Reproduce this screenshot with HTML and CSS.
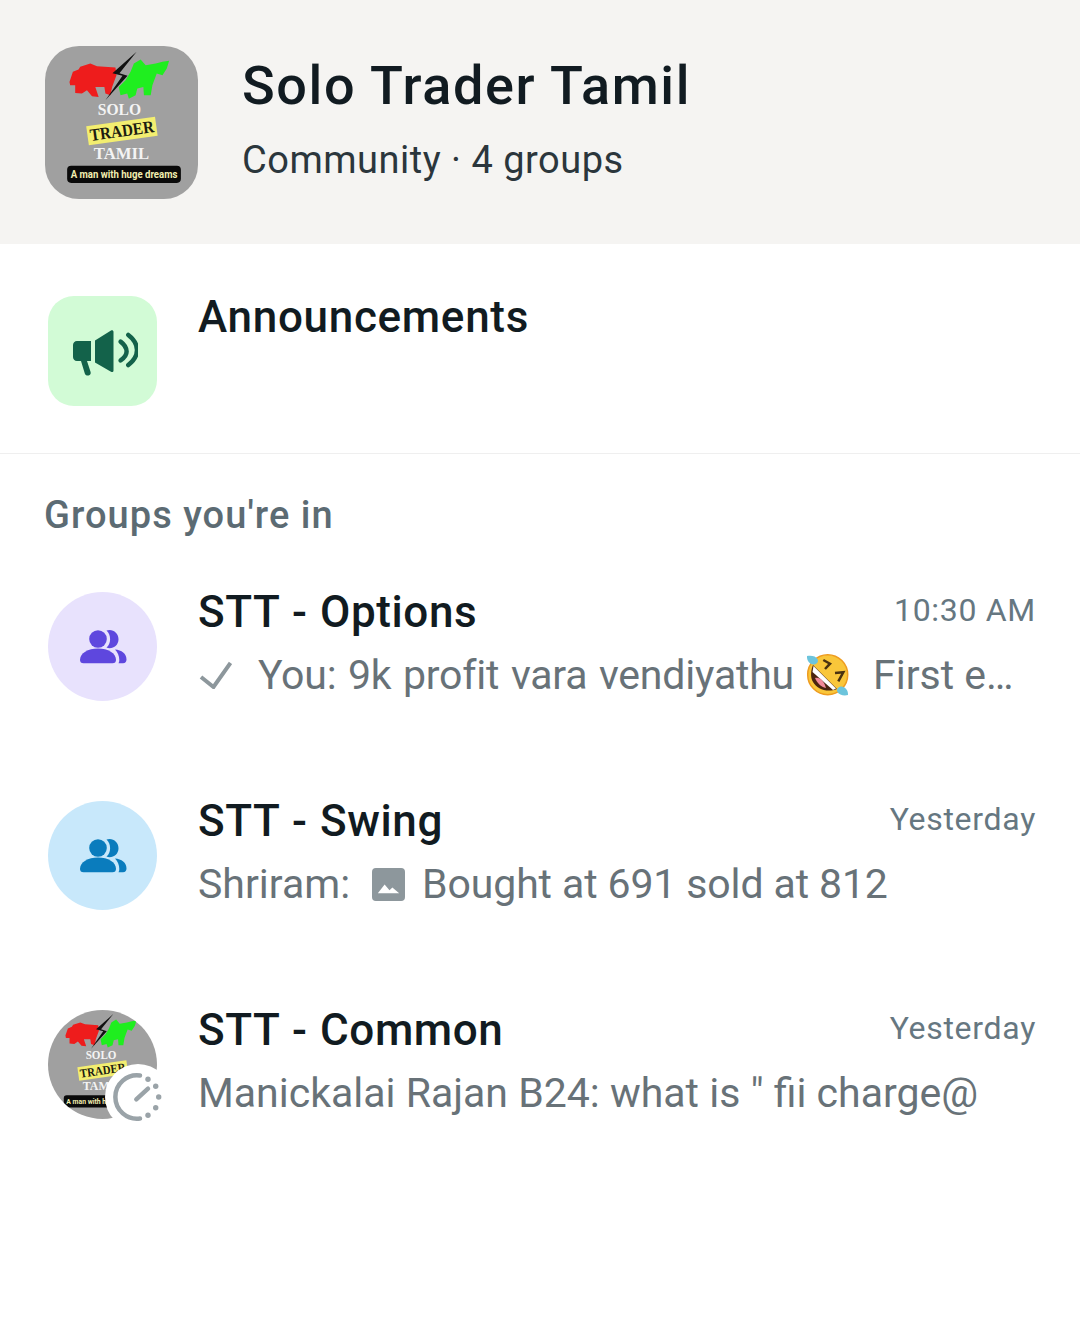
FILE: index.html
```html
<!DOCTYPE html>
<html lang="en">
<head>
<meta charset="utf-8">
<title>Solo Trader Tamil</title>
<link rel="stylesheet" href="styles.css">
</head>
<body>
<svg class="defs" width="0" height="0" aria-hidden="true">
  <defs>
    <symbol id="people" viewBox="0 0 48 36">
      <circle cx="19" cy="10" r="8.8"/>
      <path d="M27.5 1.6c1-.4 2-.6 3-.6 5 0 9 4 9 9.2s-4 9-9 9c-1 0-2-.2-3-.6 2.3-2 3.6-5 3.6-8.4s-1.3-6.600-3.600-8.600z"/>
      <path d="M1 31c0-7 8-11.500 18-11.500S37 24 37 31c0 2-1.200 3.300-3.500 3.300h-29C2.200 34.300 1 33 1 31z"/>
      <path d="M36 20.500c6.500.6 11.500 4 11.500 10 0 2.300-1.300 3.800-3.500 3.800h-4.500c.6-1 .8-2.100.8-3.300 0-4-1.600-7.800-4.300-10.500z"/>
    </symbol>
    <symbol id="logo-art" viewBox="0 0 152 152">
      <path class="bull-red" d="M24.300 35.700L27.700 25.700 33.300 23.300 35 20.700 45 17.300 51.700 20 70 21.300 71 29 66.700 40.700 65 49 60 47.300 59 40.700 50 40.700 53.300 50.700 46.700 50 41.700 44 36.700 47.300 30 46.700 30 39 25 39z"/>
      <path class="bull-green" d="M88.300 17.300L95 13.300 100 19 110 17.300 116.700 15.700 123.300 14.700 121 22.300 116.700 29 111 27.300 106.700 39 105 49 98.300 49 97.700 40.700 91.700 42.300 90 49 83.300 52.300 81.700 47.300 75 49 73.300 40.700 80 34 85 25.700z"/>
      <path class="bolt" d="M91 5.700L67 27l10 2.500L60 54l22-24.500-8-2.500z"/>
      <text class="logo-word" x="74" y="69" text-anchor="middle" textLength="43" lengthAdjust="spacingAndGlyphs">SOLO</text>
      <g transform="rotate(-8 76 85)">
        <rect class="logo-band" x="42" y="75" width="69" height="19"/>
        <text class="logo-trader" x="76.500" y="90" text-anchor="middle" textLength="64" lengthAdjust="spacingAndGlyphs">TRADER</text>
      </g>
      <text class="logo-word" x="76" y="112" text-anchor="middle" textLength="55" lengthAdjust="spacingAndGlyphs">TAMIL</text>
      <rect class="logo-tag" x="22" y="119" width="113" height="17" rx="4"/>
      <text class="logo-tagline" x="78.500" y="131" text-anchor="middle" textLength="106" lengthAdjust="spacingAndGlyphs">A man with huge dreams</text>
    </symbol>
  </defs>
</svg>

<header class="community">
  <div class="community-logo">
    <svg class="logo-svg" viewBox="0 0 152 152"><use href="#logo-art" width="152" height="152"/></svg>
  </div>
  <div class="community-text">
    <h1 class="community-name">Solo Trader Tamil</h1>
    <p class="community-meta">Community · 4 groups</p>
  </div>
</header>

<section class="announce">
  <div class="announce-icon">
    <svg class="megaphone" viewBox="0 0 66 50">
      <path d="M5 13h14v20h-4l3.600 11c.5 1.800-.4 3-2 3.400-1.700.4-3.200-.3-3.800-2L9 33H5c-2.500 0-4-2-4-4V17c0-2.200 1.600-4 4-4z"/>
      <path d="M23 12.500L39 2.400c1.200-.7 2.500 0 2.500 1.400v38.600c0 1.400-1.300 2.100-2.500 1.300L23 34.500z"/>
      <path class="wave" d="M48.600 13.600c4 3 6 6.400 6 10s-2 6.200-6 8.800"/>
      <path class="wave" d="M56.300 7c5.800 4.500 8.700 9.500 8.700 15s-2.900 10.500-8.700 15"/>
    </svg>
  </div>
  <h2 class="announce-title">Announcements</h2>
</section>

<h3 class="groups-heading">Groups you're in</h3>

<ul class="groups">
  <li class="group">
    <div class="avatar avatar-purple"><svg class="people"><use href="#people"/></svg></div>
    <div class="group-body">
      <div class="group-top"><span class="group-name">STT - Options</span><span class="group-time">10:30 AM</span></div>
      <div class="group-msg">
        <svg class="tick" viewBox="0 0 34 28"><path d="M3 16l12.500 10L32.500 2"/></svg>
        <span class="msg-you">You: 9k profit vara vendiyathu</span>
        <svg class="emoji" viewBox="0 0 46 46">
          <circle class="e-face" cx="22.700" cy="22.700" r="20"/>
          <path class="e-mouth" d="M8 13l24 24c-10 4-20 0-24-7-3-5-2-12 0-17z"/>
          <path class="e-teeth" d="M8.500 14L31 36.500l-3 1.500L7.500 20z"/>
          <path class="e-tongue" d="M10 26c5-1 9 3 11 10-5-1-9-5-11-10z"/>
          <path class="e-eye" d="M18.300 8l6.700 3.700-5 5.300M30 21l8.300-.7-5 9"/>
          <path class="e-tear" d="M2 4c4-1 9 0 10.500 3s-1 5.500-4 5.500S1.500 9 2 4zM43 43c-4 1-9 0-10.500-3s1-5.500 4-5.500S43.500 38 43 43z"/>
        </svg>
        <span class="msg-tail">First e…</span>
      </div>
    </div>
  </li>
  <li class="group">
    <div class="avatar avatar-blue"><svg class="people"><use href="#people"/></svg></div>
    <div class="group-body">
      <div class="group-top"><span class="group-name">STT - Swing</span><span class="group-time">Yesterday</span></div>
      <div class="group-msg">
        <span class="msg-sender">Shriram:</span>
        <svg class="photo" viewBox="0 0 34 34">
          <rect class="photo-bg" width="34" height="34" rx="4"/>
          <path class="photo-hill" d="M6 26l7-9 5 6 3-3 7 6z"/>
        </svg>
        <span class="msg-photo-text">Bought at 691 sold at 812</span>
      </div>
    </div>
  </li>
  <li class="group">
    <div class="avatar avatar-logo">
      <svg class="avatar-art" viewBox="0 0 152 152"><use href="#logo-art" width="152" height="152"/></svg>
      <span class="timer-badge">
        <svg class="timer" viewBox="0 0 52 52">
          <path class="timer-arc" d="M28 4.500A21.700 21.700 0 1 0 28 47.500"/>
          <path class="timer-hand" d="M24.300 28.300L36 17.700"/>
          <g class="timer-dots">
            <circle cx="36" cy="8.300" r="2.700"/><circle cx="43.700" cy="15.300" r="2.700"/><circle cx="46.700" cy="26" r="2.700"/><circle cx="43.700" cy="36.700" r="2.700"/><circle cx="36" cy="44.300" r="2.700"/>
          </g>
        </svg>
      </span>
    </div>
    <div class="group-body">
      <div class="group-top"><span class="group-name">STT - Common</span><span class="group-time">Yesterday</span></div>
      <div class="group-msg"><span>Manickalai Rajan B24: what is " fii charge@</span></div>
    </div>
  </li>
</ul>
</body>
</html>
```
FILE: styles.css
```css
* { box-sizing: border-box; }
html, body { margin: 0; padding: 0; }
body {
  width: 1080px;
  height: 1335px;
  overflow: hidden;
  background: #fff;
  font-family: Roboto, "Noto Sans", sans-serif;
  color: #111b21;
}
.defs { position: absolute; }

.community {
  height: 244px;
  background: #f5f4f2;
  display: flex;
  align-items: flex-start;
  padding: 46px 45px 0;
  gap: 44px;
}
.community-logo {
  width: 153px;
  height: 153px;
  border-radius: 34px;
  background: #a0a0a0;
  overflow: hidden;
  flex: none;
}
.logo-svg { display: block; width: 153px; height: 153px; }
.community-text { padding-top: 7px; }
.community-name {
  margin: 0;
  font-size: 54px;
  line-height: 66px;
  font-weight: 500;
  letter-spacing: 1.6px;
}
.community-meta {
  margin: 19px 0 0;
  font-size: 38px;
  line-height: 44px;
  color: #2b363c;
  letter-spacing: 0.5px;
}

.bull-red { fill: #ee1c1c; }
.bull-green { fill: #1fee1f; }
.bolt { fill: #111; }
.logo-word, .logo-trader {
  font-family: "Liberation Serif", serif;
  font-weight: 700;
}
.logo-word { fill: #f4f4f4; font-size: 17px; }
.logo-trader { fill: #1c1c10; font-size: 17px; }
.logo-band { fill: #f3ee70; }
.logo-tag { fill: #0a0a0a; }
.logo-tagline {
  fill: #f2eeb0;
  font-family: Roboto, sans-serif;
  font-weight: 700;
  font-size: 10px;
}

.announce {
  height: 210px;
  border-bottom: 1px solid #efefef;
  display: flex;
  align-items: flex-start;
  padding: 52px 0 0 48px;
  gap: 41px;
}
.announce-icon {
  width: 109px;
  height: 110px;
  border-radius: 26px;
  background: #d2fbd6;
  display: flex;
  align-items: center;
  justify-content: center;
  flex: none;
}
.megaphone { width: 66px; height: 50px; margin: 4px 0 0 4px; fill: #13624a; }
.megaphone .wave { fill: none; stroke: #13624a; stroke-width: 4.500px; stroke-linecap: round; }
.announce-title {
  margin: -5px 0 0;
  font-size: 44px;
  line-height: 52px;
  font-weight: 500;
  letter-spacing: 0.7px;
}

.groups-heading {
  margin: 38px 0 0 44px;
  font-size: 38px;
  line-height: 46px;
  font-weight: 500;
  color: #5c6b73;
  letter-spacing: 1.05px;
}

.groups {
  list-style: none;
  margin: 54px 0 0;
  padding: 0;
}
.group {
  height: 209px;
  display: flex;
  align-items: flex-start;
  padding: 0 44px 0 48px;
  gap: 41px;
}
.avatar {
  width: 109px;
  height: 109px;
  border-radius: 50%;
  display: flex;
  align-items: center;
  justify-content: center;
  flex: none;
  position: relative;
}
.avatar-purple { background: #e8e2fd; fill: #5e47de; }
.avatar-blue { background: #c8e8fb; fill: #0a7cbd; }
.avatar-logo { background: #a0a0a0; }
.people { width: 48px; height: 36px; }
.avatar-art { width: 109px; height: 109px; border-radius: 50%; display: block; }

.timer-badge {
  position: absolute;
  right: -14px;
  bottom: -11px;
  width: 66px;
  height: 66px;
  border-radius: 50%;
  background: #fff;
  display: flex;
  align-items: center;
  justify-content: center;
}
.timer { width: 52px; height: 52px; }
.timer-arc { fill: none; stroke: #9aa3a8; stroke-width: 4.500px; stroke-linecap: round; }
.timer-hand { fill: none; stroke: #9aa3a8; stroke-width: 4.500px; stroke-linecap: round; }
.timer-dots { fill: #9aa3a8; }

.group-body { flex: 1; min-width: 0; margin-top: -6px; }
.group-top {
  display: flex;
  justify-content: space-between;
  align-items: flex-start;
}
.group-name {
  font-size: 44px;
  line-height: 52px;
  font-weight: 500;
  letter-spacing: 0.6px;
  word-spacing: 1px;
}
.group-time {
  margin-top: 4px;
  font-size: 32px;
  line-height: 40px;
  color: #667781;
  letter-spacing: 0.7px;
}
.group-msg {
  margin-top: 13px;
  display: flex;
  align-items: center;
  font-size: 41px;
  line-height: 48px;
  color: #687278;
  white-space: nowrap;
}
.tick {
  width: 34px;
  height: 28px;
  margin-right: 26px;
  fill: none;
  stroke: #8d979c;
  stroke-width: 4px;
}
.msg-you { letter-spacing: -0.2px; word-spacing: 1.600px; }
.msg-photo-text { letter-spacing: -0.12px; }
.emoji { width: 46px; height: 46px; margin-left: 11px; margin-right: 22px; flex: none; }
.e-face { fill: #f9c63a; stroke: #ee9c20; stroke-width: 1.500px; }
.e-mouth { fill: #4a2410; }
.e-teeth { fill: #fff; }
.e-tongue { fill: #f28a9a; }
.e-eye { fill: none; stroke: #4a3210; stroke-width: 2.500px; }
.e-tear { fill: #6cc4dc; }
.msg-sender { margin-right: 22px; }
.photo { width: 33px; height: 33px; margin-right: 17px; flex: none; }
.photo-bg { fill: #8d979c; }
.photo-hill { fill: #fff; }
```
